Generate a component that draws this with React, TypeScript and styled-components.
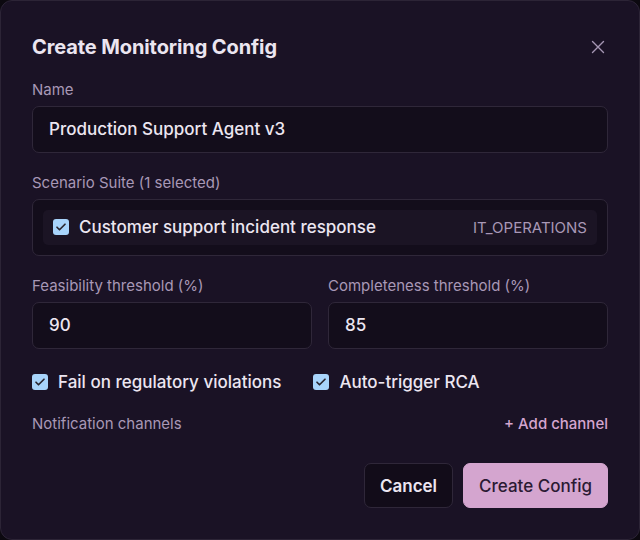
import React from 'react';
import styled, { createGlobalStyle } from 'styled-components';

const GlobalStyle = createGlobalStyle`
  html, body {
    margin: 0;
    padding: 0;
    background: #0c0910;
  }
  body {
    font-family: Inter, 'Noto Sans', sans-serif;
    -webkit-font-smoothing: antialiased;
  }
`;

const Dialog = styled.div`
  box-sizing: border-box;
  width: 640px;
  height: 540px;
  background: #1a1225;
  border: 1px solid #2c2436;
  border-radius: 12px;
  padding: 30px 31px 31px 31px;
  display: flex;
  flex-direction: column;
  color: #ece6f1;
`;

const Header = styled.div`
  display: flex;
  align-items: center;
  justify-content: space-between;
  height: 32px;
  margin-bottom: 17px;
`;

const Title = styled.h2`
  margin: 0;
  font-size: 20px;
  font-weight: 700;
  color: #ebe5f0;
  letter-spacing: -0.1px;
`;

const CloseButton = styled.button`
  background: none;
  border: none;
  padding: 0;
  margin-right: 2px;
  width: 16px;
  height: 16px;
  display: flex;
  align-items: center;
  justify-content: center;
  color: #a596b3;
  cursor: pointer;
`;

const Field = styled.div<{ $mb?: number }>`
  display: flex;
  flex-direction: column;
  margin-bottom: ${(p) => p.$mb ?? 0}px;
  min-width: 0;
`;

const Label = styled.label`
  font-size: 15px;
  line-height: 20px;
  color: #a898b6;
  margin-bottom: 6px;
`;

const Input = styled.div`
  box-sizing: border-box;
  height: 47px;
  display: flex;
  align-items: center;
  padding: 0 16px;
  background: #130d1b;
  border: 1px solid #2f2739;
  border-radius: 7px;
  font-size: 17px;
  font-weight: 500;
  color: #ece6f1;
`;

const SuiteBox = styled.div`
  box-sizing: border-box;
  height: 57px;
  padding: 10px;
  background: #130d1b;
  border: 1px solid #2f2739;
  border-radius: 7px;
`;

const SuiteRow = styled.div`
  height: 35px;
  display: flex;
  align-items: center;
  padding: 0 10px;
  background: #1b1424;
  border-radius: 5px;
`;

const SuiteName = styled.span`
  flex: 1;
  font-size: 17px;
  font-weight: 500;
  color: #ece6f1;
  margin-left: 10px;
`;

const SuiteTag = styled.span`
  font-size: 15px;
  color: #a898b6;
`;

const Grid = styled.div`
  display: grid;
  grid-template-columns: 1fr 1fr;
  gap: 16px;
  margin-bottom: 22px;
`;

const CheckRow = styled.div`
  display: flex;
  align-items: center;
  gap: 32px;
  height: 24px;
  margin-bottom: 19px;
`;

const CheckItem = styled.label`
  display: flex;
  align-items: center;
  gap: 10px;
  font-size: 17px;
  font-weight: 500;
  color: #ece6f1;
`;

const Box = styled.span`
  box-sizing: border-box;
  width: 16px;
  height: 16px;
  border-radius: 3px;
  background: #a8d4fb;
  display: flex;
  align-items: center;
  justify-content: center;
  flex-shrink: 0;
`;

const ChannelsRow = styled.div`
  display: flex;
  align-items: center;
  justify-content: space-between;
  height: 20px;
  font-size: 15px;
  margin-bottom: 30px;
`;

const MutedText = styled.span`
  color: #a898b6;
`;

const AddLink = styled.button`
  background: none;
  border: none;
  padding: 0;
  font-family: inherit;
  font-size: 15px;
  font-weight: 500;
  color: #d4a5cf;
  cursor: pointer;
`;

const Footer = styled.div`
  display: flex;
  justify-content: flex-end;
  gap: 10px;
`;

const Button = styled.button<{ $primary?: boolean }>`
  box-sizing: border-box;
  height: 45px;
  padding: 0 15px;
  border-radius: 7px;
  font-family: inherit;
  font-size: 17px;
  font-weight: ${(p) => (p.$primary ? 500 : 600)};
  background: ${(p) => (p.$primary ? '#d4a5cf' : '#120c19')};
  color: ${(p) => (p.$primary ? '#2b1a33' : '#ece6f1')};
  border: 1px solid ${(p) => (p.$primary ? '#d4a5cf' : '#2f2739')};
  cursor: pointer;
`;

const Check = () => (
  <Box>
    <svg width="12" height="12" viewBox="0 0 24 24" fill="none">
      <path
        d="M4 12.5l5 5L20 6.5"
        stroke="#2a2730"
        strokeWidth="3.4"
        strokeLinecap="round"
        strokeLinejoin="round"
      />
    </svg>
  </Box>
);

export default function App() {
  return (
    <>
      <GlobalStyle />
      <Dialog>
        <Header>
          <Title>Create Monitoring Config</Title>
          <CloseButton aria-label="Close">
            <svg width="14" height="14" viewBox="0 0 14 14">
              <path
                d="M1.5 1.5l11 11M12.5 1.5l-11 11"
                stroke="currentColor"
                strokeWidth="1.4"
                strokeLinecap="round"
              />
            </svg>
          </CloseButton>
        </Header>

        <Field $mb={20}>
          <Label>Name</Label>
          <Input>Production Support Agent v3</Input>
        </Field>

        <Field $mb={20}>
          <Label>Scenario Suite (1 selected)</Label>
          <SuiteBox>
            <SuiteRow>
              <Check />
              <SuiteName>Customer support incident response</SuiteName>
              <SuiteTag>IT_OPERATIONS</SuiteTag>
            </SuiteRow>
          </SuiteBox>
        </Field>

        <Grid>
          <Field>
            <Label>Feasibility threshold (%)</Label>
            <Input>90</Input>
          </Field>
          <Field>
            <Label>Completeness threshold (%)</Label>
            <Input>85</Input>
          </Field>
        </Grid>

        <CheckRow>
          <CheckItem>
            <Check />
            Fail on regulatory violations
          </CheckItem>
          <CheckItem>
            <Check />
            Auto-trigger RCA
          </CheckItem>
        </CheckRow>

        <ChannelsRow>
          <MutedText>Notification channels</MutedText>
          <AddLink>+ Add channel</AddLink>
        </ChannelsRow>

        <Footer>
          <Button>Cancel</Button>
          <Button $primary>Create Config</Button>
        </Footer>
      </Dialog>
    </>
  );
}
